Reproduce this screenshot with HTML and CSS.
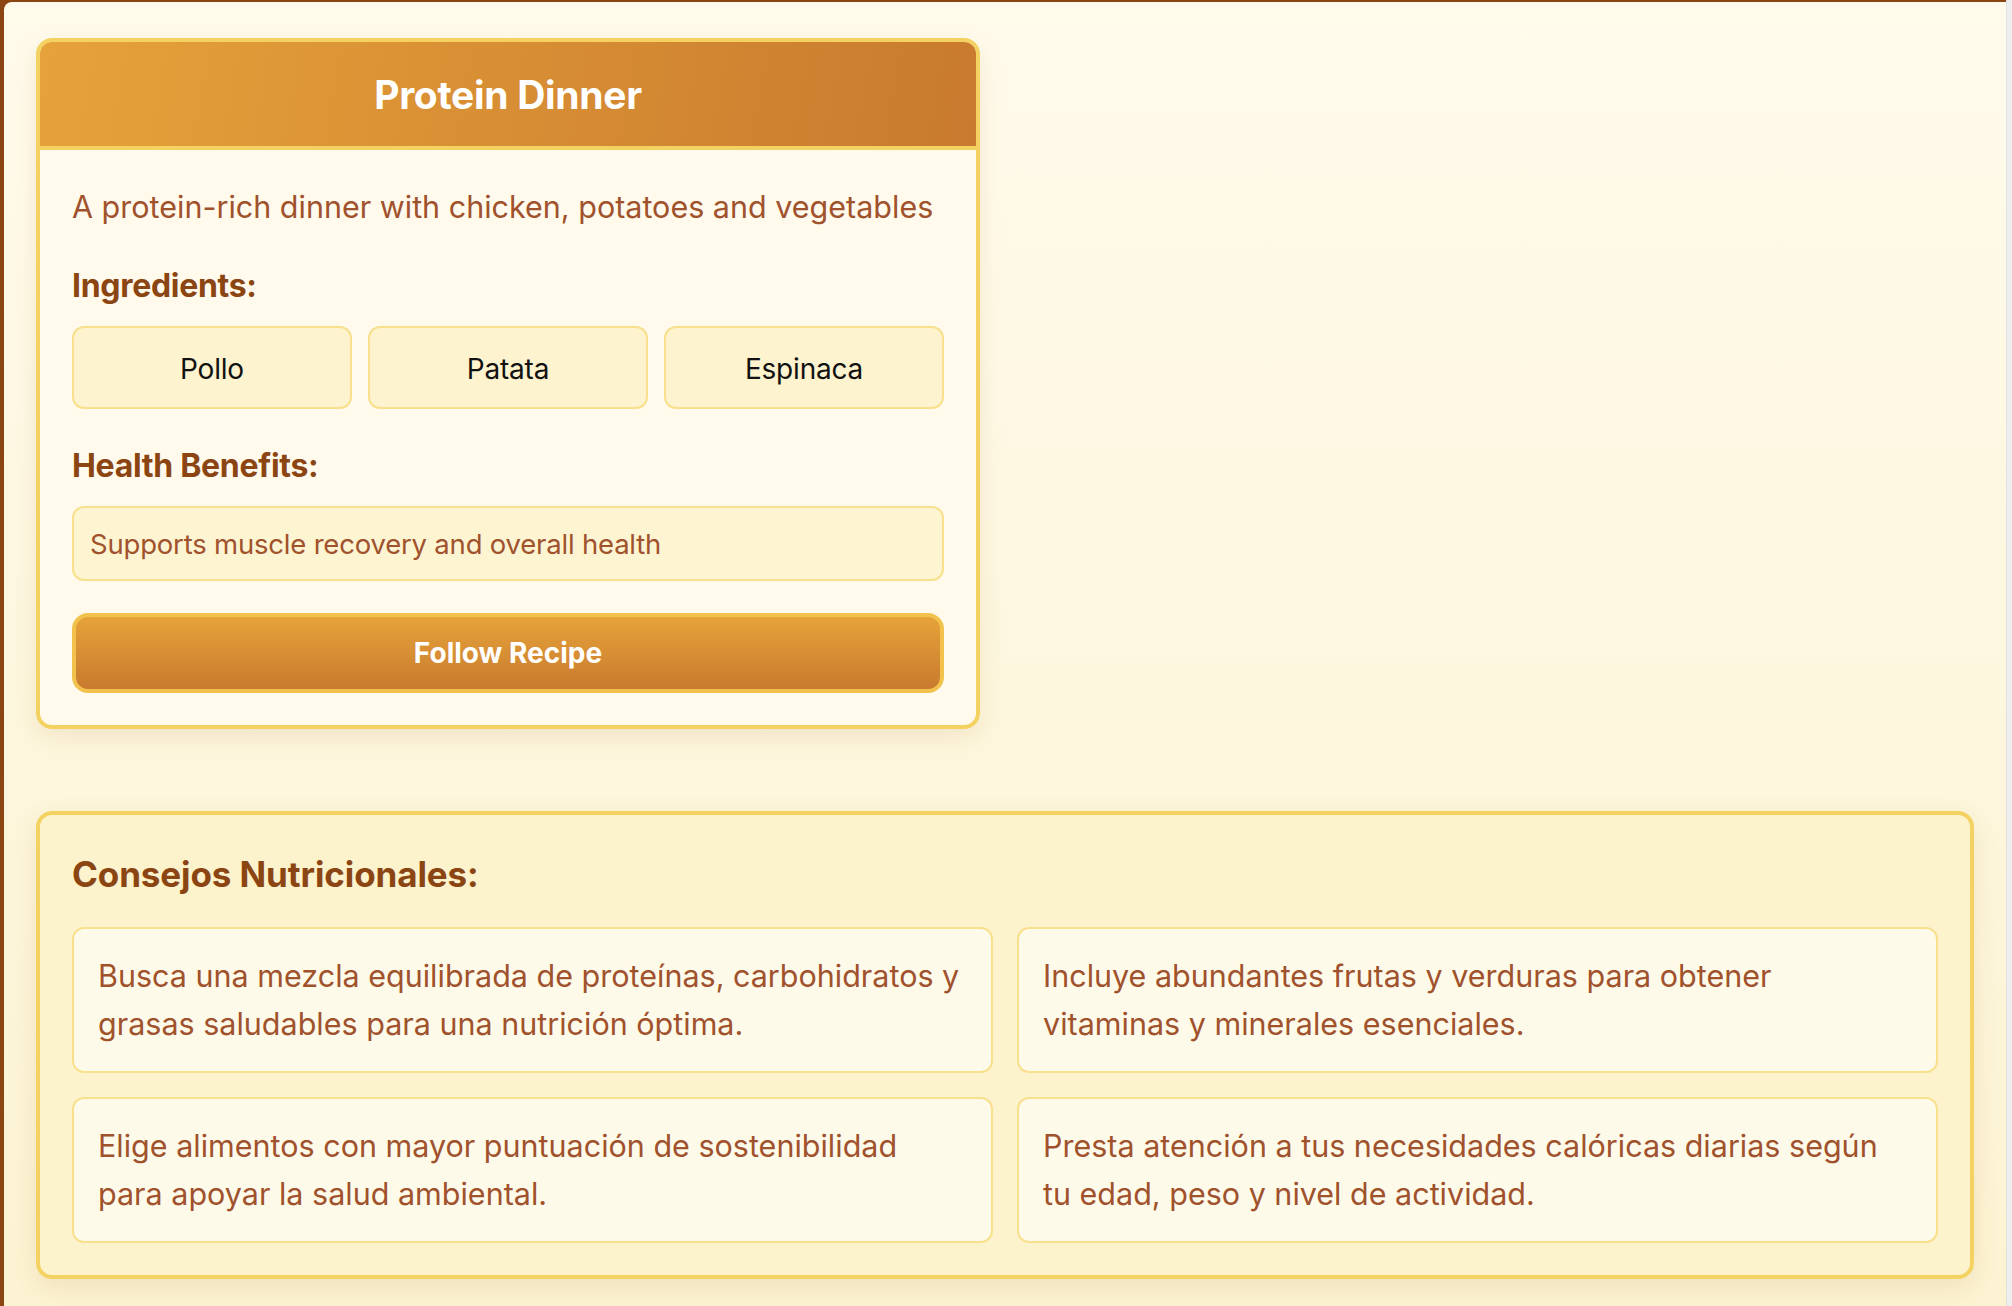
FILE: index.html
```html
<!DOCTYPE html>
<html lang="en">
<head>
<meta charset="utf-8">
<title>Protein Dinner</title>
<link rel="stylesheet" href="styles.css">
</head>
<body>
<div class="frame">
  <div class="page">
    <article class="recipe">
      <header class="recipe-head">
        <h1 class="recipe-title">Protein Dinner</h1>
      </header>
      <div class="recipe-body">
        <p class="recipe-desc">A protein-rich dinner with chicken, potatoes and vegetables</p>
        <h2 class="label">Ingredients:</h2>
        <div class="chips">
          <div class="chip">Pollo</div>
          <div class="chip">Patata</div>
          <div class="chip">Espinaca</div>
        </div>
        <h2 class="label label-after-chips">Health Benefits:</h2>
        <div class="benefit">Supports muscle recovery and overall health</div>
        <button class="follow">Follow Recipe</button>
      </div>
    </article>

    <section class="tips">
      <h2 class="tips-title">Consejos Nutricionales:</h2>
      <div class="tips-grid">
        <div class="tip">Busca una mezcla equilibrada de proteínas, carbohidratos y grasas saludables para una nutrición óptima.</div>
        <div class="tip">Incluye abundantes frutas y verduras para obtener vitaminas y minerales esenciales.</div>
        <div class="tip">Elige alimentos con mayor puntuación de sostenibilidad para apoyar la salud ambiental.</div>
        <div class="tip">Presta atención a tus necesidades calóricas diarias según tu edad, peso y nivel de actividad.</div>
      </div>
    </section>
  </div>
</div>
<div class="scroll-strip"></div>
</body>
</html>
```

FILE: styles.css
```css
* { box-sizing: border-box; }

html, body {
  margin: 0;
  height: 100%;
}

body {
  display: flex;
  background: #ededed;
  font-family: Inter, "Noto Sans", "Liberation Sans", sans-serif;
  overflow: hidden;
}

.frame {
  flex: 1;
  background: #8b4513;
  padding: 2px 0 0 4px;
  height: 1306px;
}

.scroll-strip {
  width: 6px;
  background: #eeeeee;
  border-left: 1px solid #e2e2e2;
}

.page {
  height: 100%;
  border-top-left-radius: 8px;
  background: linear-gradient(180deg, #fffbec 0%, #fcf3d2 100%);
  padding: 36px 32px 0 32px;
}

.recipe {
  width: 944px;
  border: 4px solid #f4d262;
  border-radius: 16px;
  background: #fffaeb;
  overflow: hidden;
  box-shadow: 0 8px 24px rgba(160, 100, 30, 0.12);
}

.recipe-head {
  height: 108px;
  background: linear-gradient(100deg, #e6a23a 0%, #c97a2e 100%);
  border-bottom: 4px solid #f4d262;
  display: flex;
  align-items: center;
  justify-content: center;
}

.recipe-title {
  margin: 0;
  color: #ffffff;
  font-size: 39px;
  font-weight: 700;
  letter-spacing: -0.3px;
}

.recipe-body {
  padding: 32px 32px 32px;
}

.recipe-desc {
  margin: 0;
  color: #a0522d;
  font-size: 30.5px;
  line-height: 50px;
  letter-spacing: 0;
}

.label {
  margin: 34px 0 20px;
  color: #8b4513;
  font-size: 32px;
  line-height: 40px;
  font-weight: 700;
  letter-spacing: -0.3px;
}

.label-after-chips {
  margin-top: 37px;
}

.chips {
  display: grid;
  grid-template-columns: repeat(3, 1fr);
  gap: 16px;
}

.chip {
  height: 83px;
  display: flex;
  align-items: center;
  justify-content: center;
  padding-top: 3px;
  background: #fdf3cf;
  border: 2px solid #f9e08c;
  border-radius: 12px;
  color: #111111;
  font-size: 28px;
  letter-spacing: -0.2px;
}

.benefit {
  height: 75px;
  display: flex;
  align-items: center;
  padding: 0 16px;
  background: #fdf4d2;
  border: 2px solid #f9e08c;
  border-radius: 12px;
  color: #a0522d;
  font-size: 27.5px;
  letter-spacing: -0.2px;
}

.follow {
  display: block;
  width: 100%;
  height: 80px;
  margin-top: 32px;
  border: 4px solid #f3c24c;
  border-radius: 16px;
  background: linear-gradient(180deg, #e6a33a 0%, #c97a2e 100%);
  color: #ffffff;
  font-family: inherit;
  font-size: 28px;
  font-weight: 700;
  letter-spacing: 0;
}

.tips {
  margin-top: 82px;
  border: 4px solid #f4d262;
  border-radius: 16px;
  background: #fcf2cc;
  padding: 32px 32px 32px;
  box-shadow: 0 8px 24px rgba(160, 100, 30, 0.12);
}

.tips-title {
  margin: 0 0 26px;
  color: #8b4513;
  font-size: 35px;
  line-height: 54px;
  font-weight: 700;
  letter-spacing: -0.1px;
}

.tips-grid {
  display: grid;
  grid-template-columns: 1fr 1fr;
  gap: 24px;
}

.tip {
  background: #fefaea;
  border: 2px solid #f9e08c;
  border-radius: 12px;
  padding: 23px 24px;
  color: #a0522d;
  font-size: 30.5px;
  line-height: 48px;
  letter-spacing: 0;
}
```
